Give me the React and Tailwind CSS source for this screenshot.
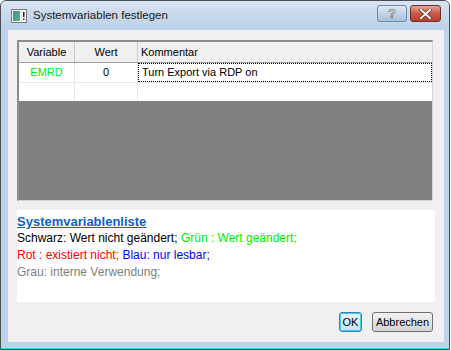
import React from "react";

const sans = { fontFamily: '"Liberation Sans", Arial, sans-serif' };

const TitleIcon = () => (
  <svg width="16" height="14" viewBox="0 0 16 14">
    <rect x="0.5" y="0.5" width="15" height="13" fill="#f4f4f4" stroke="#7a7a7a" />
    <rect x="2" y="2" width="7" height="10" fill="url(#g1)" />
    <rect x="12" y="3" width="1.5" height="5" fill="#2a2a2a" />
    <rect x="12" y="9.5" width="1.5" height="1.5" fill="#2a2a2a" />
    <defs>
      <linearGradient id="g1" x1="0" y1="0" x2="1" y2="1">
        <stop offset="0" stopColor="#3b8fb0" />
        <stop offset="1" stopColor="#5cb86a" />
      </linearGradient>
    </defs>
  </svg>
);

const HelpButton = () => (
  <div className="w-[30px] h-[17px] rounded-[3px] border border-[#6f8aa8] bg-gradient-to-b from-[#dce8f4] to-[#a9c1dc] flex items-center justify-center">
    <span
      className="text-[13px] font-bold leading-none text-white"
      style={{ ...sans, WebkitTextStroke: "0.6px #4a5a6a" }}
    >
      ?
    </span>
  </div>
);

const CloseButton = () => (
  <div className="w-[31px] h-[17px] rounded-[3px] border border-[#6e2e2a] bg-gradient-to-b from-[#e0a49a] via-[#c85a48] to-[#b83e2c] flex items-center justify-center">
    <svg width="13" height="10" viewBox="0 0 13 10">
      <path d="M2 1 L11 9 M11 1 L2 9" stroke="#5a2a22" strokeWidth="3.4" strokeLinecap="square" />
      <path d="M2 1 L11 9 M11 1 L2 9" stroke="#ffffff" strokeWidth="2" strokeLinecap="square" />
    </svg>
  </div>
);

export default function App() {
  return (
    <div className="w-[451px] h-[350px] bg-white" style={sans}>
      <div className="w-[450px] h-[350px] flex flex-col border border-[#4a4f55] rounded-t-[6px] overflow-hidden bg-[#bcd3ea]">
        {/* title bar */}
        <div className="h-[29px] flex items-center bg-gradient-to-b from-[#dbe6f2] via-[#c6d8ec] to-[#bcd3ea] pl-[10px] pr-[8px]">
          <TitleIcon />
          <span className="ml-[6px] text-[11.5px] text-[#1a1a1a] mt-[1px]">Systemvariablen festlegen</span>
          <div className="ml-auto flex gap-[3px] -mt-[4px]">
            <HelpButton />
            <CloseButton />
          </div>
        </div>

        {/* client area */}
        <div className="ml-[7px] mr-[5px] h-[312px] bg-[#f0f0f0] flex flex-col pl-[9px]">
          {/* table */}
          <div className="mt-[10px] w-[416px] h-[161px] flex flex-col border-t-2 border-l-2 border-t-[#8c8c8c] border-l-[#8c8c8c] border-r border-b border-r-[#d4d4d4] border-b-[#d4d4d4]">
            <div className="h-[21px] flex bg-[#f0f0f0] border-b border-[#a0a0a0] text-[11px] text-black">
              <div className="w-[56px] flex items-center justify-center border-r border-[#c8c8c8]">Variable</div>
              <div className="w-[63px] flex items-center justify-center border-r border-[#c8c8c8]">Wert</div>
              <div className="flex-1 flex items-center pl-[3px]">Kommentar</div>
            </div>
            <div className="h-[20px] flex bg-white border-b border-[#e8e8e8] text-[11px]">
              <div className="w-[56px] flex items-center justify-center border-r border-[#e8e8e8] text-[#00ee00]">EMRD</div>
              <div className="w-[63px] flex items-center justify-center border-r border-[#e8e8e8] text-black">0</div>
              <div className="flex-1 flex items-center pl-[3px] border border-dotted border-black text-black">
                Turn Export via RDP on
              </div>
            </div>
            <div className="h-[18px] flex bg-white">
              <div className="w-[56px] border-r border-[#e8e8e8]" />
              <div className="w-[63px] border-r border-[#e8e8e8]" />
              <div className="flex-1" />
            </div>
            <div className="flex-1 bg-[#808080]" />
          </div>

          {/* legend */}
          <div className="mt-[9px] w-[418px] h-[92px] bg-white pt-[3px] text-[12px] leading-[17px]">
            <div className="text-[13px] font-bold text-[#0b63c4] underline leading-[17px]">Systemvariablenliste</div>
            <div>
              <span className="text-black">Schwarz: Wert nicht geändert;</span>{" "}
              <span className="text-[#00ee00]">Grün : Wert geändert;</span>
            </div>
            <div>
              <span className="text-[#ff0000]">Rot : existiert nicht;</span>{" "}
              <span className="text-[#0000ff]">Blau: nur lesbar;</span>
            </div>
            <div className="text-[#808080]">Grau: interne Verwendung;</div>
          </div>

          {/* buttons */}
          <div className="mt-[10px] w-[418px] flex justify-end gap-[10px] pr-[2px]">
            <button className="w-[23px] h-[20px] rounded-[3px] border border-[#3c7fb1] bg-gradient-to-b from-[#eaf6fd] to-[#bee6fd] shadow-[inset_0_0_0_1px_#48c6f0] text-[11px] text-black leading-none">
              OK
            </button>
            <button className="w-[61px] h-[20px] rounded-[3px] border border-[#707070] bg-gradient-to-b from-[#f2f2f2] to-[#d4d4d4] text-[11px] text-black leading-none">
              Abbrechen
            </button>
          </div>
        </div>
        <div className="flex-1" />
        <div className="h-[1px] bg-[#3fd4e8]" />
      </div>
    </div>
  );
}
